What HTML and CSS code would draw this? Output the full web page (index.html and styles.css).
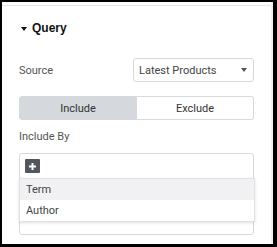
FILE: index.html
```html
<!DOCTYPE html>
<html>
<head>
<meta charset="utf-8">
<link rel="stylesheet" href="styles.css">
</head>
<body>
<div class="panel">
  <div class="topline"></div>
  <div class="content">
    <div class="title"><span class="caret"></span><span class="title-text">Query</span></div>
    <div class="row">
      <span class="label">Source</span>
      <div class="select"><span>Latest Products</span><span class="sel-arrow"></span></div>
    </div>
    <div class="toggle">
      <div class="tg tg-on">Include</div>
      <div class="tg">Exclude</div>
    </div>
    <div class="label label-by">Include By</div>
    <div class="box">
      <div class="box-top"><span class="plus"><svg width="9" height="9" viewBox="0 0 9 9"><path d="M4.5 1v7M1 4.5h7" stroke="#fff" stroke-width="2"/></svg></span></div>
      <div class="menu">
        <div class="item item-hover">Term</div>
        <div class="item">Author</div>
      </div>
    </div>
  </div>
  <div class="strip"></div>
</div>
</body>
</html>
```
FILE: styles.css
```css
html, body {
  margin: 0;
  padding: 0;
  background: #000;
  width: 277px;
  height: 247px;
  overflow: hidden;
}
.panel {
  position: relative;
  margin: 2px 4px 0 2px;
  width: 271px;
  height: 242px;
  background: #fff;
  font-family: Roboto, "Liberation Sans", sans-serif;
}
.topline {
  height: 3px;
  border-bottom: 1px solid #e6e6e6;
}
.strip {
  position: absolute;
  right: 0;
  top: 0;
  width: 2px;
  height: 100%;
  background: #f0f0f0;
}
.content {
  padding: 10px 19px 0 17px;
}
.title {
  display: flex;
  align-items: center;
  height: 24px;
}
.caret {
  width: 0;
  height: 0;
  border-left: 3px solid transparent;
  border-right: 3px solid transparent;
  border-top: 4px solid #111;
  margin-left: 2px;
  margin-right: 5px;
  margin-top: 1px;
}
.title-text {
  font-family: "Liberation Sans", Arial, sans-serif;
  font-weight: bold;
  font-size: 12px;
  color: #111;
}
.row {
  display: flex;
  align-items: center;
  justify-content: space-between;
  margin-top: 18px;
}
.label {
  font-size: 11px;
  color: #555;
}
.select {
  box-sizing: border-box;
  width: 121px;
  height: 24px;
  border: 1px solid #d5dadf;
  border-radius: 3px;
  display: flex;
  align-items: center;
  justify-content: space-between;
  padding: 0 6px 0 5px;
  font-size: 11px;
  color: #444;
}
.sel-arrow {
  width: 0;
  height: 0;
  border-left: 3px solid transparent;
  border-right: 3px solid transparent;
  border-top: 4px solid #555;
}
.toggle {
  display: flex;
  margin-top: 14px;
  height: 24px;
}
.tg {
  flex: 1;
  box-sizing: border-box;
  display: flex;
  align-items: center;
  justify-content: center;
  font-size: 11px;
  color: #333;
  border: 1px solid #d5dadf;
  border-left: none;
  border-radius: 0 3px 3px 0;
}
.tg-on {
  background: #d5d8dc;
  border: 1px solid #d5d8dc;
  border-radius: 3px 0 0 3px;
}
.label-by {
  margin-top: 10px;
  line-height: 14px;
}
.box {
  position: relative;
  box-sizing: border-box;
  margin-top: 9px;
  height: 82px;
  border: 1px solid #d5dadf;
  border-radius: 3px;
}
.box-top {
  height: 24px;
  display: flex;
  align-items: center;
  padding-left: 5px;
}
.plus {
  width: 15px;
  height: 14px;
  background: #50575e;
  display: flex;
  align-items: center;
  justify-content: center;
  border-radius: 1px;
}
.plus svg { display: block; }
.menu {
  position: absolute;
  left: -1px;
  right: -2px;
  top: 24px;
  background: #fff;
  border: 1px solid #e2e2e2;
  box-shadow: 0 1px 3px rgba(0,0,0,0.12);
}
.item {
  height: 21px;
  display: flex;
  align-items: center;
  padding-left: 6px;
  font-size: 11px;
  color: #444;
}
.item-hover {
  background: #f1f1f3;
}
```
